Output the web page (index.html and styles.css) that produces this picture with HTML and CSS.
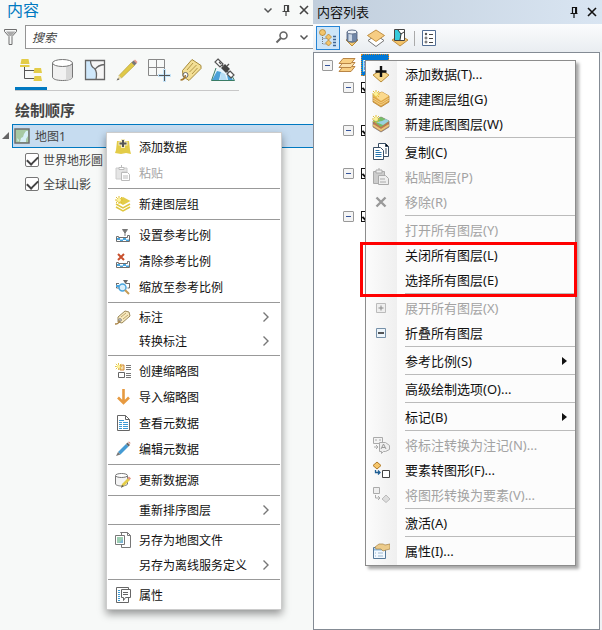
FILE: index.html
```html
<!DOCTYPE html>
<html lang="zh-CN">
<head>
    <meta charset="UTF-8">
    <meta name="viewport" content="width=device-width, initial-scale=1.0">
    <title>内容</title>
    <link rel="stylesheet" href="styles.css">
</head>
<body>
    <!-- Shared shapes -->
    <svg class="sprite" aria-hidden="true">
        <symbol id="arrow" viewBox="0 0 8 12"><path d="M1.5 1.5 6 6l-4.500 4.500" fill="none" stroke="#777" stroke-width="1.400"/></symbol>
        <symbol id="down" viewBox="0 0 10 10"><path d="M1.500 3.500 5 7l3.500-3.500" fill="none" stroke="#555" stroke-width="1.500"/></symbol>
        <symbol id="pin" viewBox="0 0 10 12"><path d="M3 1.500h4.500V7M3.500 1v6M1.500 7.500h7M5 8v4" fill="none" stroke="currentColor" stroke-width="1.200"/><path d="M6 1h2v6H6z" fill="currentColor"/></symbol>
        <symbol id="close" viewBox="0 0 10 10"><path d="m1 1 8 8M9 1 1 9" fill="none" stroke="currentColor" stroke-width="1.600"/></symbol>
        <symbol id="bar" viewBox="0 0 16 16"><path d="M1.500 14.500h13V8.500h-2v2h-9v-1h-2z" fill="#fff" stroke="#6e6e6e"/><path d="M2 11h3v2H2zM8 11h3v2H8zM5 12.500h3V14H5zM11 12.500h3V14h-3z" fill="#4aa5dd"/></symbol>
        <symbol id="burst" viewBox="0 0 8 8"><path d="M4 0v8M0 4h8M1 1l6 6M7 1 1 7" stroke="#e0bd35" fill="none"/><circle cx="4" cy="4" r="2" fill="#fdf29a"/></symbol>
    </svg>

    <div class="panels">
        <section class="pro">
            <header class="pro-header">
                <h1 class="pro-title">内容</h1>
                <button class="icon-button" aria-label="选项"><svg width="10" height="10"><use href="#down"/></svg></button>
                <button class="icon-button" aria-label="固定"><svg width="10" height="12"><use href="#pin"/></svg></button>
                <button class="icon-button" aria-label="关闭"><svg width="10" height="10"><use href="#close"/></svg></button>
            </header>

            <div class="search-row">
                <svg class="funnel" width="16" height="18" viewBox="0 0 16 18"><path d="M1.500 1.500h12v2L9 8.500v8H6v-8l-4.500-5z" fill="#f7f9f8" stroke="#6e6e6e"/><path d="M3 3.500h9.500L8.500 8h-2z" fill="#aaa"/></svg>
                <div class="search-box">
                    <input class="search-input" type="text" placeholder="搜索" aria-label="搜索">
                    <button class="icon-button" aria-label="搜索"><svg width="14" height="14" viewBox="0 0 14 14"><circle cx="8.500" cy="5.500" r="3.500" fill="none" stroke="#666" stroke-width="1.600"/><path d="m6 8-4.500 4.500" stroke="#666" stroke-width="2"/></svg></button>
                    <button class="icon-button" aria-label="搜索选项"><svg width="10" height="10"><use href="#down"/></svg></button>
                </div>
            </div>

            <nav class="pro-tools">
                <button class="pro-tool active" aria-label="按绘制顺序列出"><svg width="24" height="24" viewBox="0 0 24 24"><path d="M5.500 9v11.500H15M5.500 12.500H15" fill="none" stroke="#555"/><path d="M2.500 1h7l1 5h-9zM1 7h9.500v2H1zM15.500 10h6.500l1 5h-8.500zM15.500 18h6.500l1 5h-8.500z" fill="#e3cc48"/></svg></button>
                <button class="pro-tool" aria-label="按数据源列出"><svg width="24" height="24" viewBox="0 0 24 24"><path d="M1.500 5v14c0 2 4 3.500 10 3.500s10-1.500 10-3.500V5" fill="#f1f1f1" stroke="#777"/><path d="M15 8v14c4 0 6-1 6-3V6z" fill="#d6d6d6"/><ellipse cx="11.500" cy="5" rx="10" ry="3.500" fill="#fff" stroke="#777"/></svg></button>
                <button class="pro-tool" aria-label="按选择列出"><svg width="24" height="24" viewBox="0 0 24 24"><path d="M2.500 2.500h19v19h-19z" fill="#f5f5f5"/><path d="M2.500 2.500h5q0 6 3 8 4 3 2 11h-10z" fill="#cfe8fb"/><path d="M7.500 2.500q0 6 4 8 3 3 1.500 11M12 11.500q3-4.500 9.500-5M2.500 2.500h19v19h-19z" fill="none" stroke="#666" stroke-width="1.300"/></svg></button>
                <button class="pro-tool" aria-label="按编辑列出"><svg width="24" height="24" viewBox="0 0 24 24"><path d="M4 17.500 16.500 4.500l3 3L6.500 20z" fill="#e0c948" stroke="#b09a35" stroke-width=".6"/><path d="m18.500 3 1.500-1.500 2.500 2.500-1.500 2z" fill="#e59a8c"/><path d="m16.500 4.500 2-2 3 3-2 2z" fill="#777"/><path d="M4 17.500 6.500 20l-4.500 2.500z" fill="#e9d9a5"/><path d="m3 20 1.500 1.500-3 1z" fill="#666"/></svg></button>
                <button class="pro-tool" aria-label="按捕捉列出"><svg width="24" height="24" viewBox="0 0 24 24"><path d="M1.500 1.500h16v16h-16zM9.500 1.500v16M1.500 9.500h16" fill="#f7f9f8" stroke="#888"/><path d="M16 11h3v5h5v3h-5v5h-3v-5h-5v-3h5z" fill="#c5e4f8"/><path d="M17.500 12v11M12 17.500h11" stroke="#555"/></svg></button>
                <button class="pro-tool" aria-label="按标注列出"><svg width="24" height="24" viewBox="0 0 24 24"><path d="M3.500 12.500 13 1.500l9 6v3L10 22.500l-6-4z" fill="#f3df95" stroke="#a58a3c"/><path d="m8 12 6-7M10.500 14l7-7M13 16l5.500-6" stroke="#b39748"/><circle cx="6.500" cy="17" r="2.500" fill="#fff" stroke="#666"/><path d="M6.500 17q-1 5-5 5" fill="none" stroke="#a4782d" stroke-width="1.500"/></svg></button>
                <button class="pro-tool" aria-label="按感知影像列出"><svg width="24" height="24" viewBox="0 0 24 24"><path d="M5 11 0 23h24l-4-7-7-6z" fill="#e8f5fc"/><path d="m6 13-5 9h7l2-8z" fill="#4ba1d8"/><path d="m9 22 1-8 4 2 2 6z" fill="#b7def5"/><path d="m16 17 4 2 2 3h-5z" fill="#4ba1d8"/><path d="M5 10 .5 22.500h23L21 18" fill="none" stroke="#397c65"/><path d="m7 1 5 5-3 3-5-5zM19 13l4 4-3 3-4-4z" fill="#fff" stroke="#555" stroke-width="1.200"/><path d="m14 6 5 5-4 4-5-5z" fill="#444"/><path d="m11 7 2 2M16 13l2 2M16 8l2-2M8 4l2 2" stroke="#555" stroke-width="1.300"/></svg></button>
            </nav>

            <h2 class="order-title">绘制顺序</h2>

            <div class="map-row">
                <svg class="expander" width="8" height="8" viewBox="0 0 8 8"><path d="M7 0v7H0z" fill="#666"/></svg>
                <div class="map-name">
                    <svg width="16" height="16" viewBox="0 0 16 16"><path d="M1 1h14v14H1z" fill="#a7c9a3" stroke="#6e6e6e" stroke-width="1.500"/><path d="M14 6v2l-2 3v3H6l1-4 2-1 1-3 2-3h2zM3 10l2 2-1 2z" fill="#d8eff7"/></svg>
                    <span>地图1</span>
                </div>

                <ul class="pro-menu">
                    <li><button class="pro-item"><svg class="pro-icon" viewBox="0 0 16 16"><path d="M2 2h12l1 9 1 4-5-1-5 1-6-1 1-3z" fill="#e3cc48"/><path d="M8 0v9M3.500 4.500h9" stroke="#f5edc0" stroke-width="4"/><path d="M8 1v7M4.500 4.500h7" stroke="#555" stroke-width="2"/></svg>添加数据</button></li>
                    <li><button class="pro-item" disabled><svg class="pro-icon" viewBox="0 0 16 16"><path d="M1 3h11v4H7v7H1z" fill="#e5e5e5" stroke="#ccc"/><path d="M4 2.500h5v2H4zM6.500 0v2" fill="#fff" stroke="#bbb"/><path d="M6.500 7.500h6l2 2v6h-8zM8 11h5M8 13h5" fill="#fff" stroke="#bbb"/></svg>粘贴</button></li>
                    <li class="pro-line"></li>
                    <li><button class="pro-item"><svg class="pro-icon" viewBox="0 0 16 16"><path d="m8 1 7.500 4L8 9 1 5z" fill="#e3cc48"/><path d="m1 8 7 4 7-4M1 11l7 4 7-4" fill="none" stroke="#dfc63e" stroke-width="1.500"/><use href="#burst" width="8" height="8"/></svg>新建图层组</button></li>
                    <li class="pro-line"></li>
                    <li><button class="pro-item"><svg class="pro-icon" viewBox="0 0 16 16"><use href="#bar" width="16" height="16"/><path d="M7.500 2.500h5L10 6zM10 5v4" fill="#777" stroke="#777"/></svg>设置参考比例</button></li>
                    <li><button class="pro-item"><svg class="pro-icon" viewBox="0 0 16 16"><use href="#bar" width="16" height="16"/><path d="m3 1 6 6m0-6L3 7" stroke="#c8502d" stroke-width="2"/></svg>清除参考比例</button></li>
                    <li><button class="pro-item"><svg class="pro-icon" viewBox="0 0 16 16"><path d="M1.500 4v5h3M14.500 4v5h-2M1 4.500h3M11 4.500h4" fill="none" stroke="#6e6e6e"/><path d="M1 6h3v2H1z" fill="#4aa5dd"/><path d="M8 1h5l-2.500 4z" fill="#666"/><circle cx="7.500" cy="8.500" r="3.500" fill="#d9effc" stroke="#4aa5dd" stroke-width="1.500"/><path d="m10 11 4 4" stroke="#c59b55" stroke-width="2"/></svg>缩放至参考比例</button></li>
                    <li class="pro-line"></li>
                    <li><button class="pro-item short"><svg class="pro-icon" viewBox="0 0 16 16"><path d="m3 8 7-6 4 1 1 4-8 7-4-1z" fill="#f7e8be" stroke="#9c8a5c"/><path d="m6 8 5-4M8 10l5-4" stroke="#bda66a"/><circle cx="5" cy="11" r="1.300" fill="#fff" stroke="#777"/><path d="M4.500 11.500Q4 15 0 15" fill="none" stroke="#a98244" stroke-width="1.500"/></svg>标注<svg class="sub-arrow"><use href="#arrow"/></svg></button></li>
                    <li><button class="pro-item short"><span class="pro-icon"></span>转换标注<svg class="sub-arrow"><use href="#arrow"/></svg></button></li>
                    <li class="pro-line"></li>
                    <li><button class="pro-item"><svg class="pro-icon" viewBox="0 0 16 16"><path d="M5 2h4v5H5z" fill="#f5ddb0" stroke="#d18a37"/><path d="M3.500 9.500h6v5h-6z" fill="#fff" stroke="#666"/><path d="M11 2.500h5M11 4.500h5M11 6.500h5M11 10.500h5M11 12.500h5M11 14.500h5" stroke="#777"/><use href="#burst" width="7" height="7"/></svg>创建缩略图</button></li>
                    <li><button class="pro-item"><svg class="pro-icon" viewBox="0 0 16 16"><path d="M8.500 0v14M3 8.500 8.500 14 14 8.500" fill="none" stroke="#e79a40" stroke-width="2.600"/></svg>导入缩略图</button></li>
                    <li><button class="pro-item"><svg class="pro-icon" viewBox="0 0 16 16"><path d="M2.500.5h8l4 4v11h-12zM10.500.5v4h4" fill="#fff" stroke="#666"/><path d="M4 5.500h5M4 7.500h3m1 0h5M4 9.500h3m1 0h5M4 11.500h3m1 0h5M4 13.500h3m1 0h5" stroke="#3b9bd7"/></svg>查看元数据</button></li>
                    <li><button class="pro-item"><svg class="pro-icon" viewBox="0 0 16 16"><path d="m3 11 8-8 2.500 2.500-8 8z" fill="#459bd4"/><path d="m11 3 1.500-1.500L15 4l-1.500 1.500z" fill="#666"/><path d="m13 1 1-.5 1.500 1.500-.5 1z" fill="#d78676"/><path d="m3 11 2.500 2.500L1 15z" fill="#777"/></svg>编辑元数据</button></li>
                    <li class="pro-line"></li>
                    <li><button class="pro-item"><svg class="pro-icon" viewBox="0 0 16 16"><path d="M.5 4v8c0 1 3 2 6 2s6-1 6-2V4" fill="#f4f4f4" stroke="#777"/><ellipse cx="6.500" cy="3.500" rx="6" ry="2" fill="#fff" stroke="#777"/><path d="m7 12 6-6 2 2-6 6-3 1z" fill="#e3cc48"/><path d="m12.500 6 1.500-1.500L16 6.500 14.500 8z" fill="#df9482"/><path d="m7 13-1 3 3-2z" fill="#555"/></svg>更新数据源</button></li>
                    <li class="pro-line"></li>
                    <li><button class="pro-item short"><span class="pro-icon"></span>重新排序图层<svg class="sub-arrow"><use href="#arrow"/></svg></button></li>
                    <li class="pro-line"></li>
                    <li><button class="pro-item"><svg class="pro-icon" viewBox="0 0 16 16"><path d="M5.500.5h7l3 3v12h-9V.5zM12.500.5v3h3" fill="#fff" stroke="#777"/><path d="M.5 3.500h9v9h-9z" fill="#fff" stroke="#777"/><path d="M2 5h6v6H2z" fill="#9dceb2"/><path d="M8 7v4H4l2-2z" fill="#7cb5d7"/></svg>另存为地图文件</button></li>
                    <li><button class="pro-item short"><span class="pro-icon"></span>另存为离线服务定义<svg class="sub-arrow"><use href="#arrow"/></svg></button></li>
                    <li class="pro-line"></li>
                    <li><button class="pro-item"><svg class="pro-icon" viewBox="0 0 16 16"><path d="M1.500.5h12v15h-12z" fill="#fff" stroke="#666"/><path d="M3 3.500h2M3 5.500h2M3 7.500h2M3 9.500h2M3 11.500h2M3 13.500h2" stroke="#3b9bd7"/><path d="M6.500 2.500h9v8h-5l-2 3v-3h-2z" fill="#fff" stroke="#666"/><path d="M8 5.500h5M8 7.500h5" stroke="#666"/></svg>属性</button></li>
                </ul>
            </div>

            <label class="layer"><input class="layer-check" type="checkbox" checked>世界地形圖</label>
            <label class="layer"><input class="layer-check" type="checkbox" checked>全球山影</label>
        </section>

        <section class="toc">
            <header class="toc-header">
                <h1 class="toc-title">内容列表</h1>
                <button class="icon-button" aria-label="固定"><svg width="10" height="12"><use href="#pin"/></svg></button>
                <button class="icon-button" aria-label="关闭"><svg width="10" height="10"><use href="#close"/></svg></button>
            </header>

            <nav class="toc-tools">
                <button class="toc-tool active" aria-label="按绘制顺序列出"><svg width="20" height="20" viewBox="0 0 20 20"><path d="M4.500 7v9H10M4.500 10.500H10" fill="none" stroke="#777" stroke-dasharray="1 1"/><circle cx="4.500" cy="4.500" r="3" fill="#f2c56c" stroke="#ad7a28" stroke-width=".7"/><path d="m10.500 6 3 3-3 3-3-3zM10.500 12l3 3-3 3-3-3z" fill="#f2c56c" stroke="#ad7a28" stroke-width=".7"/><path d="M15 8.500h3M15 11.500h3M15 14.500h3M15 17.500h3" stroke="#3e6594" stroke-width="1.400"/></svg></button>
                <button class="toc-tool" aria-label="按源列出"><svg width="20" height="20" viewBox="0 0 20 20"><path d="m4 12 6-3 6 3-6 6z" fill="#f5ca71" stroke="#bd8d38"/><path d="M5 4v8c0 3 10 3 10 0V4" fill="#7187a8" stroke="#4b5c78" stroke-width=".8"/><path d="M6.500 5v8H10V5z" fill="#cad6e5"/><ellipse cx="10" cy="4" rx="5" ry="2" fill="#edf2f8" stroke="#61718b"/></svg></button>
                <button class="toc-tool" aria-label="按可见性列出"><svg width="20" height="20" viewBox="0 0 20 20"><path d="m10 7 8 5.500-8 6-8-6z" fill="#fff" stroke="#777"/><path d="m10 2 8.500 5.500-8.500 6-8.500-6z" fill="#f6cd83" stroke="#b27c28" stroke-width=".8"/></svg></button>
                <button class="toc-tool" aria-label="按选择列出"><svg width="20" height="20" viewBox="0 0 20 20"><path d="m2 12 8-5 8 5-8 6z" fill="#f3c36a" stroke="#b27c28" stroke-width=".8"/><path d="M4.500 1.500h10v11h-10z" fill="#fff" stroke="#444"/><path d="M5 2h3l3 4-1 6H5z" fill="#36cadb"/><path d="M8 2l3 4-1 6M11 6l3-2" fill="none" stroke="#333"/></svg></button>
                <span class="tool-gap"></span>
                <button class="toc-tool" aria-label="选项"><svg width="20" height="20" viewBox="0 0 20 20"><path d="M3.500 2.500h13v15h-13z" fill="#fff" stroke="#526d93"/><circle cx="7" cy="6" r="1.200" fill="#555"/><circle cx="7" cy="10" r="1" fill="#fff" stroke="#555"/><circle cx="7" cy="14" r="1" fill="#fff" stroke="#555"/><path d="M10 6.500h4M10 10.500h4M10 14.500h4" stroke="#444"/></svg></button>
            </nav>

            <div class="toc-tree">
                <div class="toc-root">
                    <button class="toggle" aria-label="折叠"></button>
                    <svg width="18" height="16" viewBox="0 0 18 16"><path d="m1 14.500 4-5h12l-4 5z" fill="#f8ce82" stroke="#b98545"/><path d="m1 10.500 4-5h12l-4 5z" fill="#fbe0ab" stroke="#b98545"/><path d="m1 6.500 4-5h12l-4 5z" fill="#f8cf83" stroke="#b98545"/></svg>
                    <span class="root-name">图层</span>

                    <ul class="toc-menu">
                        <li><button class="toc-item"><svg class="toc-icon" viewBox="0 0 18 18"><path d="m9 5 8 5-8 7-8-7z" fill="#f8d789" stroke="#b98d3c"/><path d="M9 1v11M3.500 6.500h11" stroke="#111" stroke-width="2.400"/></svg>添加数据(T)...</button></li>
                        <li><button class="toc-item"><svg class="toc-icon" viewBox="0 0 18 18"><path d="m1 5 9-3 7 4v6l-8 5-8-5z" fill="#dfa646" stroke="#a97527" stroke-width=".7"/><path d="m1 5 9-3 7 4-8 5z" fill="#fbd98d"/><path d="m1 8 8 5 8-5M1 10l8 5 8-5" fill="none" stroke="#f9dfa0" stroke-width=".7"/><use href="#burst" width="8" height="8"/></svg>新建图层组(G)</button></li>
                        <li><button class="toc-item"><svg class="toc-icon" viewBox="0 0 18 18"><path d="m1 6 8-4 8 4v6l-8 5-8-5z" fill="#ba7950" stroke="#777" stroke-width=".7"/><path d="m1 10 8 5 8-5" stroke="#e9c477" stroke-width="2" fill="none"/><path d="m1 6 8-4 8 4-8 6z" fill="#76bd67"/><path d="m4 7 6-1 4-2 3 2-6 4z" fill="#9bd1df"/><use href="#burst" width="8" height="8"/></svg>新建底图图层(W)</button></li>
                        <li class="toc-line"></li>
                        <li><button class="toc-item"><svg class="toc-icon" viewBox="0 0 18 18"><path d="M6.500.5h7l3 3v10h-10z" fill="#fff" stroke="#394e65"/><path d="M13.500.5v3h3M13 6h2M13 8h2M13 10h2" stroke="#394e65"/><path d="M1.500 4.500h7l3 3v9h-10z" fill="#fff" stroke="#394e65"/><path d="M3.500 7.500h4M3.500 9.500h6M3.500 11.500h6M3.500 13.500h6" stroke="#2876af"/></svg>复制(C)</button></li>
                        <li><button class="toc-item" disabled><svg class="toc-icon" viewBox="0 0 18 18"><path d="M1.500 3.500h11v12h-11z" fill="#ccc" stroke="#aaa"/><path d="M4 2h6v3H4zM7 0v2" fill="#eee" stroke="#aaa"/><path d="M6.500 7.500h7l3 3v6h-10zM8 11h5M8 14h6" fill="#eee" stroke="#aaa"/></svg>粘贴图层(P)</button></li>
                        <li><button class="toc-item" disabled><svg class="toc-icon" viewBox="0 0 18 18"><path d="m4.500 4.500 9 9m0-9-9 9" stroke="#999" stroke-width="2.400"/></svg>移除(R)</button></li>
                        <li class="toc-line"></li>
                        <li><button class="toc-item" disabled><span class="toc-icon"></span>打开所有图层(Y)</button></li>
                        <li class="marked">
                            <button class="toc-item"><span class="toc-icon"></span>关闭所有图层(L)</button>
                            <button class="toc-item"><span class="toc-icon"></span>选择所有图层(E)</button>
                        </li>
                        <li class="toc-line"></li>
                        <li><button class="toc-item" disabled><svg class="toc-icon" viewBox="0 0 18 18"><path d="M4.500 4.500h9v9h-9z" fill="#eee" stroke="#bbb"/><path d="M6.500 9h5M9 6.500v5" stroke="#888"/></svg>展开所有图层(X)</button></li>
                        <li><button class="toc-item"><svg class="toc-icon" viewBox="0 0 18 18"><path d="M4.500 4.500h9v9h-9z" fill="#edf5fb" stroke="#7690a8"/><path d="M6 9h6" stroke="#111" stroke-width="1.400"/></svg>折叠所有图层</button></li>
                        <li class="toc-line"></li>
                        <li><button class="toc-item"><span class="toc-icon"></span>参考比例(S)<span class="solid-arrow"></span></button></li>
                        <li class="toc-line"></li>
                        <li><button class="toc-item"><span class="toc-icon"></span>高级绘制选项(O)...</button></li>
                        <li class="toc-line"></li>
                        <li><button class="toc-item"><span class="toc-icon"></span>标记(B)<span class="solid-arrow"></span></button></li>
                        <li class="toc-line"></li>
                        <li><button class="toc-item" disabled><svg class="toc-icon" viewBox="0 0 18 18"><path d="M1.500 1.500h9v6h-9zM3 4h2M7 4h2M2 11h4m-2-2 2 2-2 2" fill="#f3f3f3" stroke="#aaa"/><path d="M7.500 6.500h6l4 3v4l-4 2h-2l-2 2v-2h-2z" fill="#eee" stroke="#aaa"/><path d="m9 13 2.500-5 2.500 5M10 11.500h3" fill="none" stroke="#999"/></svg>将标注转换为注记(N)...</button></li>
                        <li><button class="toc-item"><svg class="toc-icon" viewBox="0 0 18 18"><path d="m5 1 4 3.500L5 8 1 4.500z" fill="#f6c66b" stroke="#b17a27"/><path d="M3.500 9v2.500H8m-2-2 2 2-2 2" fill="none" stroke="#1f5e94" stroke-width="1.300"/><path d="M10.500 9.500h7v7h-7z" fill="#fff" stroke="#444"/></svg>要素转图形(F)...</button></li>
                        <li><button class="toc-item" disabled><svg class="toc-icon" viewBox="0 0 18 18"><path d="M1.500 1.500h6v6h-6z" fill="#eee" stroke="#aaa"/><path d="M3.500 9v3H8m-2-2 2 2-2 2" fill="none" stroke="#aaa"/><path d="m14 9 4 4-4 3.500-4-3.500z" fill="#ddd" stroke="#bbb"/></svg>将图形转换为要素(V)...</button></li>
                        <li class="toc-line"></li>
                        <li><button class="toc-item"><span class="toc-icon"></span>激活(A)</button></li>
                        <li class="toc-line"></li>
                        <li><button class="toc-item"><svg class="toc-icon" viewBox="0 0 18 18"><path d="M1.500 5.500h12v11h-12z" fill="#f3f9ff" stroke="#56799a"/><path d="M2 7.500h11" stroke="#8fb8dc" stroke-width="2"/><path d="M3 11h1M6 11h5M3 14h1M6 14h5" stroke="#9db8d0"/><path d="m3 5 4-3h4l2 1 5-1v5l-4 1-3 1-2-2H6L4 7z" fill="#eccb8b" stroke="#a88447" stroke-width=".7"/></svg>属性(I)...</button></li>
                    </ul>
                </div>
                <div class="toc-layer"><button class="toggle" aria-label="折叠"></button><input class="toc-check" type="checkbox" aria-label="图层 1" checked></div>
                <div class="toc-layer"><button class="toggle" aria-label="折叠"></button><input class="toc-check" type="checkbox" aria-label="图层 2" checked></div>
                <div class="toc-layer"><button class="toggle" aria-label="折叠"></button><input class="toc-check" type="checkbox" aria-label="图层 3" checked></div>
                <div class="toc-layer"><button class="toggle" aria-label="折叠"></button><input class="toc-check" type="checkbox" aria-label="图层 4" checked></div>
            </div>
        </section>
    </div>
</body>
</html>
```

FILE: styles.css
```css
* {
    box-sizing: border-box;
}

body {
    margin: 0;
    font-family: "Noto Sans", "Noto Sans CJK SC", sans-serif;
    font-size: 12px;
    color: #444;
    background-color: #f7f9f8;
}

h1, h2, ul {
    margin: 0;
    padding: 0;
    list-style: none;
}

button, input {
    margin: 0;
    padding: 0;
    border: none;
    background: none;
    font: inherit;
    color: inherit;
}

svg {
    display: block;
    flex: none;
}

.sprite {
    position: absolute;
    width: 0;
    height: 0;
}

.panels {
    display: grid;
    grid-template-columns: 52fr 48fr;
    min-height: 100vh;
}

.icon-button {
    display: flex;
    align-items: center;
    justify-content: center;
    width: 18px;
    height: 18px;
}

/* Left panel */
.pro {
    min-width: 0;
    overflow-x: clip;
}

.pro-header {
    display: flex;
    align-items: center;
    height: 20px;
    padding-left: 7px;
}

.pro-title {
    flex: 1;
    font-size: 16px;
    font-weight: normal;
    line-height: 20px;
    color: #0079c1;
}

.pro-header .icon-button {
    height: 16px;
}

.search-row {
    display: flex;
    align-items: center;
    gap: 6px;
    padding: 5px 0 0 3px;
}

.search-box {
    display: flex;
    flex: 1;
    align-items: center;
    gap: 4px;
    height: 24px;
    padding-left: 6px;
    background-color: #fff;
    border: 1px solid #949494;
    border-right: none;
}

.search-input {
    flex: 1;
    min-width: 0;
    font-style: italic;
    outline: none;
}

.search-input::placeholder {
    color: #444;
    opacity: 1;
}

.pro-tools {
    display: flex;
    width: max-content;
    margin: 6px 0 0 15px;
    border-bottom: 1px solid #c8c8c8;
}

.pro-tool {
    display: flex;
    justify-content: center;
    width: 32px;
    height: 35px;
    padding-top: 3px;
}

.pro-tool.active {
    border-bottom: 3px solid #0079c1;
}

.order-title {
    padding: 9px 0 3px 15px;
    font-size: 15px;
    line-height: 21px;
}

.map-row {
    position: relative;
    display: flex;
    align-items: center;
    gap: 2px;
    padding-left: 2px;
}

.map-name {
    display: flex;
    flex: 1;
    align-items: center;
    gap: 5px;
    height: 24px;
    padding-left: 1px;
    background-color: #c6dcf0;
    border: 1px solid #0079c1;
    border-right: none;
}

.layer {
    display: flex;
    align-items: center;
    gap: 4px;
    height: 24px;
    padding-left: 25px;
}

.layer-check {
    display: grid;
    place-content: center;
    width: 14px;
    height: 14px;
    appearance: none;
    background-color: #fff;
    border: 1px solid #777;
    border-radius: 2px;
}

.layer-check:checked::after {
    content: "";
    width: 5px;
    height: 9px;
    margin-bottom: 2px;
    border: solid #444;
    border-width: 0 2px 2px 0;
    transform: rotate(45deg);
}

/* Left context menu */
.pro-menu {
    position: absolute;
    top: 8px;
    left: 106px;
    z-index: 1;
    min-width: 176px;
    padding: 1px;
    color: #111;
    background-color: #fff;
    border: 1px solid #ccc;
    box-shadow: 0 4px 8px rgba(0, 0, 0, 0.4);
}

.pro-item {
    display: flex;
    align-items: center;
    gap: 8px;
    width: 100%;
    height: 26px;
    padding: 0 10px 0 7px;
    white-space: nowrap;
}

.pro-item.short {
    height: 24px;
}

.pro-item:disabled {
    color: #a5a5a5;
}

.pro-item:hover:enabled {
    background-color: #e5f1fb;
}

.pro-icon {
    width: 16px;
    height: 16px;
}

.sub-arrow {
    width: 8px;
    height: 12px;
    margin-left: auto;
}

.pro-line {
    height: 5px;
    border: solid #fff;
    border-width: 2px 0;
    background-color: #999;
}

/* Right panel */
.toc {
    display: flex;
    flex-direction: column;
    min-width: 0;
    color: #111;
    font-size: 13px;
    background-color: #f0f2f5;
}

.toc-header {
    display: flex;
    align-items: center;
    height: 24px;
    padding: 0 1px 0 4px;
    background: linear-gradient(to right, #c1cedc, #d9e5f2);
}

.toc-title {
    flex: 1;
    font-size: 13px;
    font-weight: normal;
    line-height: 22px;
}

.toc-tools {
    display: flex;
    align-items: center;
    height: 28px;
    padding-left: 3px;
    background: linear-gradient(#fbfcfd, #e9edf1);
}

.toc-tool {
    display: flex;
    align-items: center;
    justify-content: center;
    width: 24px;
    height: 24px;
}

.toc-tool.active {
    background-color: #cde5f8;
    border: 1px solid #2684d5;
}

.tool-gap {
    width: 1px;
    height: 15px;
    margin: 0 2px;
    background-color: #aaa;
}

.toc-tree {
    flex: 1;
    margin-right: 2px;
    background-color: #fff;
    border: 1px solid #848b94;
}

.toc-root {
    position: relative;
    display: flex;
    align-items: center;
    gap: 5px;
    height: 24px;
    padding-left: 8px;
}

.root-name {
    height: 22px;
    line-height: 20px;
    color: #fff;
    background-color: #0078d7;
    border: 1px dotted #d98b28;
}

.toggle {
    display: grid;
    place-items: center;
    width: 11px;
    height: 11px;
    background-color: #f4f4f4;
    border: 1px solid #999;
    border-radius: 1px;
}

.toggle::after {
    content: "";
    width: 5px;
    height: 1px;
    background-color: #35549b;
}

.toc-layer {
    display: flex;
    align-items: flex-start;
    gap: 7px;
    height: 43px;
    padding: 5px 0 0 29px;
}

.toc-check {
    display: grid;
    place-content: center;
    width: 11px;
    height: 11px;
    appearance: none;
    background-color: #fff;
    border: 1px solid #111;
}

.toc-check:checked::after {
    content: "";
    width: 4px;
    height: 7px;
    border: solid #111;
    border-width: 0 2px 2px 0;
    transform: rotate(45deg);
}

/* Right context menu */
.toc-menu {
    position: absolute;
    top: 7px;
    left: 51px;
    z-index: 1;
    min-width: 211px;
    padding: 0 0 2px;
    background: linear-gradient(to right, #fcfcfc, #efefef 31px, #fcfcfc 31px);
    border: 1px solid #8c8c8c;
    box-shadow: 3px 3px 3px rgba(0, 0, 0, 0.35);
}

.toc-item {
    display: flex;
    align-items: center;
    gap: 15px;
    width: 100%;
    height: 25px;
    padding: 0 8px 0 6px;
    white-space: nowrap;
}

.toc-item:disabled {
    color: #a3a3a3;
}

.toc-item:hover:enabled {
    background-color: #cde5f8;
}

.toc-icon {
    width: 18px;
    height: 18px;
}

.toc-line {
    height: 1px;
    margin: 1px 0 1px 39px;
    background-color: #bbb;
}

.solid-arrow {
    margin-left: auto;
    border: solid transparent;
    border-width: 4px 0 4px 5px;
    border-left-color: #111;
}

/* Red frame round the two highlighted commands */
.marked {
    position: relative;
}

.marked::after {
    content: "";
    position: absolute;
    inset: 0 -2px -5px -6px;
    border: 3px solid #f00;
    pointer-events: none;
}
```
